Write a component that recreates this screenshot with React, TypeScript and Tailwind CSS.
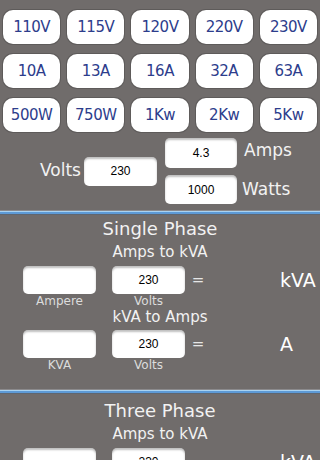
import React from "react";

const FONT = { fontFamily: '"DejaVu Sans", "Liberation Sans", sans-serif' };

const rows = [
  ["110V", "115V", "120V", "220V", "230V"],
  ["10A", "13A", "16A", "32A", "63A"],
  ["500W", "750W", "1Kw", "2Kw", "5Kw"],
];

function Field({ value, w = "w-[73px]", h = "h-[28px]" }: { value?: string; w?: string; h?: string }) {
  return (
    <div
      className={`${w} ${h} bg-white rounded-[5px] flex items-center justify-center text-[12px] text-black shadow-[inset_0_2px_2px_rgba(0,0,0,0.25)]`}
      style={{ fontFamily: '"Liberation Sans", Arial, sans-serif' }}
    >
      {value}
    </div>
  );
}

function Divider() {
  return (
    <div className="w-full flex flex-col">
      <div className="h-[1px] bg-[#8b8a8c]" />
      <div className="h-[1px] bg-[#a9d3f2]" />
      <div className="h-[2px] bg-[#5d9ad6]" />
      <div className="h-[1px] bg-[#5f6670]" />
    </div>
  );
}

function CalcRow({ b, result, la, lb }: { b: string; result: string; la: string; lb: string }) {
  return (
    <div className="flex flex-col">
      <div className="flex items-center pl-[23px]">
        <Field />
        <div className="ml-[16px]">
          <Field value={b} />
        </div>
        <div className="w-[26px] text-center text-[15px] text-[#e6e6e6]">=</div>
        <div className="ml-[69px] text-[19px] text-white leading-none">{result}</div>
      </div>
      <div className="flex pl-[23px] mt-[1px] text-[12px] leading-[13px] text-[#dcdcdc]">
        <div className="w-[73px] text-center">{la}</div>
        <div className="w-[73px] ml-[16px] text-center">{lb}</div>
      </div>
    </div>
  );
}

export default function App() {
  return (
    <div className="w-[320px] h-[460px] overflow-hidden bg-[#706c6b]" style={FONT}>
      <div className="grid grid-cols-5 gap-x-[7px] gap-y-[10px] pt-[10px] px-[3px]">
        {rows.flat().map((t) => (
          <div
            key={t}
            className="h-[34px] bg-white rounded-[10px] flex items-center justify-center text-[15px] text-[#2d3d8c] tracking-[-0.5px] shadow-[0_0_0_1px_rgba(60,60,60,0.35)]"
          >
            {t}
          </div>
        ))}
      </div>

      <div className="flex items-center mt-[6px] pl-[40px]">
        <div className="text-[17px] text-[#f2f2f2] w-[44px]">Volts</div>
        <Field value="230" w="w-[73px]" h="h-[29px]" />
        <div className="flex flex-col gap-[7px] ml-[8px]">
          <div className="flex items-center">
            <Field value="4.3" w="w-[72px]" h="h-[30px]" />
            <div className="ml-[7px] text-[17px] text-[#f2f2f2] -mt-[4px]">Amps</div>
          </div>
          <div className="flex items-center">
            <Field value="1000" w="w-[72px]" h="h-[29px]" />
            <div className="ml-[5px] text-[17px] text-[#f2f2f2]">Watts</div>
          </div>
        </div>
      </div>

      <div className="mt-[6px]">
        <Divider />
      </div>

      <div className="text-center text-[18px] leading-[22px] text-[#f2f2f2] mt-[3px]">Single Phase</div>
      <div className="text-center text-[15px] leading-[18px] text-[#f2f2f2] mt-[3px]">Amps to kVA</div>
      <div className="mt-[5px]">
        <CalcRow b="230" result="kVA" la="Ampere" lb="Volts" />
      </div>
      <div className="text-center text-[15px] leading-[18px] text-[#f2f2f2] mt-[0px]">kVA to Amps</div>
      <div className="mt-[4px]">
        <CalcRow b="230" result="A" la="KVA" lb="Volts" />
      </div>

      <div className="mt-[17px]">
        <Divider />
      </div>

      <div className="text-center text-[18px] leading-[22px] text-[#f2f2f2] mt-[6px]">Three Phase</div>
      <div className="text-center text-[15px] leading-[18px] text-[#f2f2f2] mt-[3px]">Amps to kVA</div>
      <div className="mt-[5px]">
        <CalcRow b="230" result="kVA" la="Ampere" lb="Volts" />
      </div>
    </div>
  );
}
